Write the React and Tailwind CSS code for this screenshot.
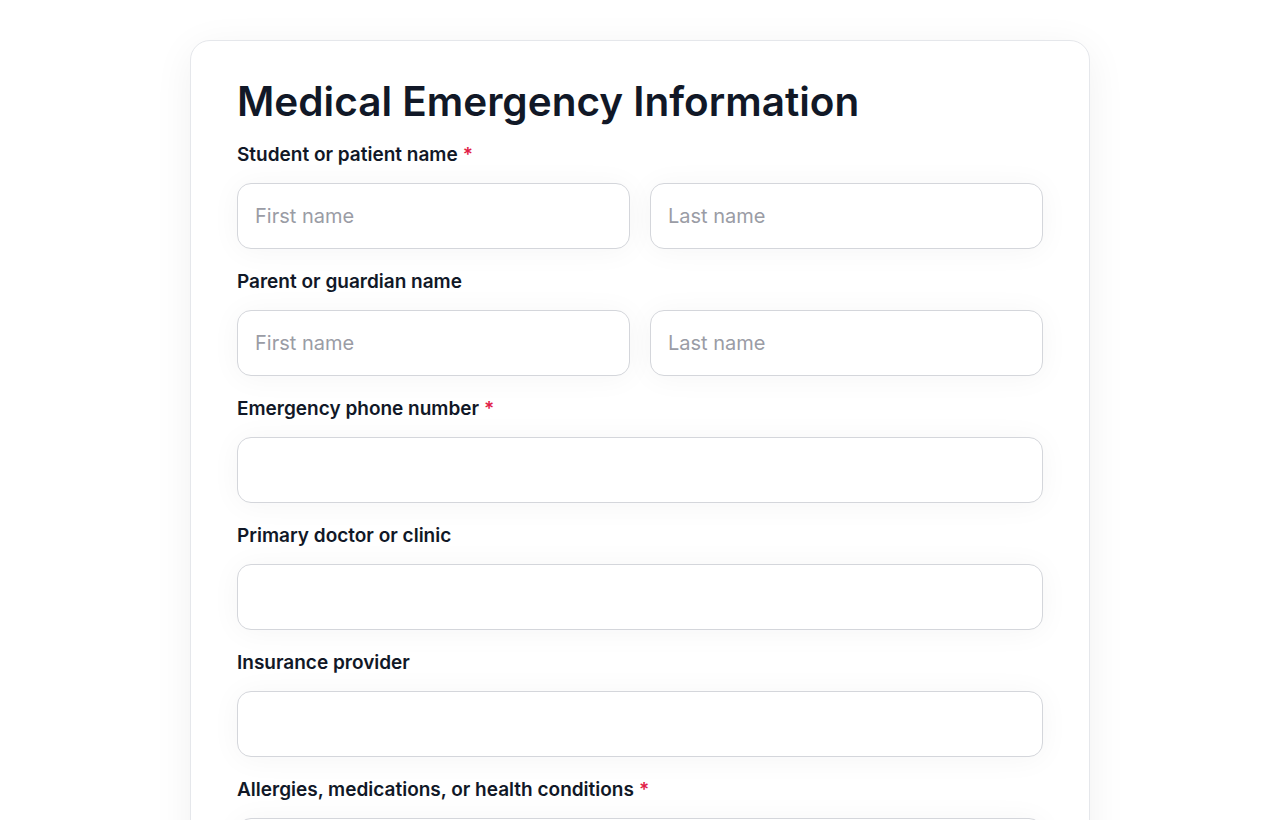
import React from 'react';

const Label = ({ children, required }) => (
  <label className="block text-[19px] leading-[28px] font-semibold text-[#111827]">
    {children}
    {required && <span className="ml-[5px] text-[#e11d48]">*</span>}
  </label>
);

const Input = ({ placeholder }) => (
  <input
    type="text"
    placeholder={placeholder}
    className="w-full h-[66px] rounded-[14px] border border-[#d4d6db] bg-white px-[17px] text-[20px] text-[#111827] placeholder:text-[#9a9ca5] shadow-[0_2px_30px_rgba(17,24,39,0.045)] outline-none"
  />
);

const Field = ({ label, required, children }) => (
  <div className="flex flex-col gap-[14px]">
    <Label required={required}>{label}</Label>
    {children}
  </div>
);

const App = () => {
  return (
    <div className="min-h-screen bg-white pt-10 font-['Inter',sans-serif]">
      <div className="mx-auto w-[900px] rounded-[20px] border border-[#e5e7eb] bg-white px-[46px] pt-[35px] pb-10 shadow-[0_8px_40px_rgba(17,24,39,0.06)]">
        <h1 className="text-[40.5px] leading-[52px] font-semibold text-[#111827] mb-[13px]">
          Medical Emergency Information
        </h1>
        <div className="flex flex-col gap-[19px]">
          <Field label="Student or patient name" required>
            <div className="grid grid-cols-2 gap-5">
              <Input placeholder="First name" />
              <Input placeholder="Last name" />
            </div>
          </Field>
          <Field label="Parent or guardian name">
            <div className="grid grid-cols-2 gap-5">
              <Input placeholder="First name" />
              <Input placeholder="Last name" />
            </div>
          </Field>
          <Field label="Emergency phone number" required>
            <Input />
          </Field>
          <Field label="Primary doctor or clinic">
            <Input />
          </Field>
          <Field label="Insurance provider">
            <Input />
          </Field>
          <Field label="Allergies, medications, or health conditions" required>
            <textarea className="w-full h-[140px] rounded-[14px] border border-[#d4d6db] bg-white px-[17px] py-4 text-[20px] shadow-[0_2px_30px_rgba(17,24,39,0.045)] outline-none resize-none" />
          </Field>
        </div>
      </div>
    </div>
  );
};

export default App;
